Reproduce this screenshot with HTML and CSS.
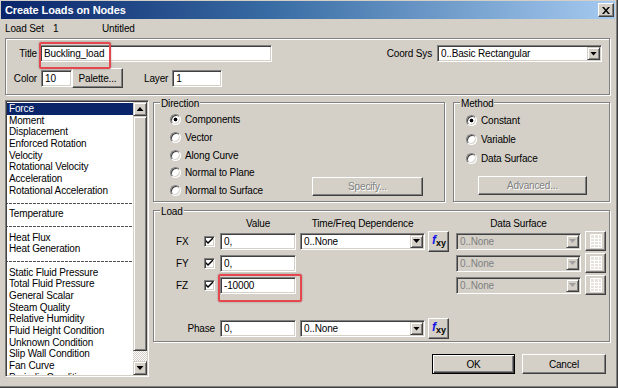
FILE: index.html
```html
<!DOCTYPE html>
<html lang="en">
<head>
<meta charset="UTF-8">
<meta name="viewport" content="width=device-width, initial-scale=1.0">
<title>Create Loads on Nodes</title>
<link rel="stylesheet" href="styles.css">
</head>
<body>

<div class="window">
  <!-- Caption bar -->
  <div class="titlebar">
    <span class="caption">Create Loads on Nodes</span>
    <span class="close-btn">
      <svg width="8" height="7" viewBox="0 0 8 7"><path d="M0 0h2l2 2.4L6 0h2L5 3.5 8 7H6L4 4.6 2 7H0l3-3.5z" fill="#000"/></svg>
    </span>
  </div>

  <div class="dialog">
    <div class="loadset">
      <span class="ls-label">Load Set</span>
      <span class="ls-id">1</span>
      <span class="ls-name">Untitled</span>
    </div>

    <!-- Title / colour / layer -->
    <div class="etched top-group">
      <div class="top-row">
        <span class="lbl-col">Title</span>
        <span class="mark mark-title"><input class="field title-field" value="Buckling_load"></span>
        <span class="coord-lbl">Coord Sys</span>
        <div class="combo coord-combo"><span class="combo-text">0..Basic Rectangular</span><span class="drop"><i class="arrow-down"></i></span></div>
      </div>
      <div class="top-row second">
        <span class="lbl-col">Color</span>
        <input class="field color-field" value="10">
        <button class="btn palette-btn">Palette...</button>
        <span class="layer-lbl">Layer</span>
        <input class="field layer-field" value="1">
      </div>
    </div>

    <div class="main">
      <!-- Load type list -->
      <div class="listbox">
        <ul class="items">
          <li class="sel">Force</li>
          <li>Moment</li>
          <li>Displacement</li>
          <li>Enforced Rotation</li>
          <li>Velocity</li>
          <li>Rotational Velocity</li>
          <li>Acceleration</li>
          <li>Rotational Acceleration</li>
          <li class="sep"></li>
          <li>Temperature</li>
          <li class="sep"></li>
          <li>Heat Flux</li>
          <li>Heat Generation</li>
          <li class="sep"></li>
          <li>Static Fluid Pressure</li>
          <li>Total Fluid Pressure</li>
          <li>General Scalar</li>
          <li>Steam Quality</li>
          <li>Relative Humidity</li>
          <li>Fluid Height Condition</li>
          <li>Unknown Condition</li>
          <li>Slip Wall Condition</li>
          <li>Fan Curve</li>
          <li>Periodic Condition</li>
        </ul>
        <div class="scrollbar">
          <span class="sb-btn"><i class="arrow-up"></i></span>
          <span class="sb-thumb"></span>
          <span class="sb-track"></span>
          <span class="sb-btn"><i class="arrow-down"></i></span>
        </div>
      </div>

      <div class="right">
        <div class="upper">
          <div class="etched group direction">
            <span class="legend">Direction</span>
            <div class="radios">
              <div class="radio-row"><span class="radio on"></span>Components</div>
              <div class="radio-row"><span class="radio"></span>Vector</div>
              <div class="radio-row"><span class="radio"></span>Along Curve</div>
              <div class="radio-row"><span class="radio"></span>Normal to Plane</div>
              <div class="radio-row"><span class="radio"></span>Normal to Surface</div>
            </div>
            <button class="btn specify-btn" disabled>Specify...</button>
          </div>

          <div class="etched group method">
            <span class="legend">Method</span>
            <div class="radios">
              <div class="radio-row"><span class="radio on"></span>Constant</div>
              <div class="radio-row"><span class="radio"></span>Variable</div>
              <div class="radio-row"><span class="radio"></span>Data Surface</div>
            </div>
            <button class="btn advanced-btn" disabled>Advanced...</button>
          </div>
        </div>

        <div class="etched group load">
          <span class="legend">Load</span>
          <div class="load-grid">
            <span class="hd hd-value">Value</span>
            <span class="hd hd-time">Time/Freq Dependence</span>
            <span class="hd hd-ds">Data Surface</span>

            <!-- FX -->
            <span class="comp">FX</span>
            <span class="check"><svg width="7" height="7" viewBox="0 0 7 7"><path d="M0 2l2 2 5-5v2L2 6 0 4z" fill="#000"/></svg></span>
            <input class="field val" value="0,">
            <div class="combo tf"><span class="combo-text">0..None</span><span class="drop"><i class="arrow-down"></i></span></div>
            <button class="btn fxy"><span class="fx-f">f</span><span class="fx-xy">xy</span></button>
            <div class="combo ds disabled"><span class="combo-text">0..None</span><span class="drop"><i class="arrow-down"></i></span></div>
            <button class="btn grid-btn" disabled><svg width="12" height="14" viewBox="0 0 12 14"><path d="M.5.5h11v13H.5zM.5 4.5h11M.5 7.5h11M.5 10.5h11M4.5.5v13M8.5.5v13" fill="#E6E3DC" stroke="#fff"/></svg></button>

            <!-- FY -->
            <span class="comp">FY</span>
            <span class="check"><svg width="7" height="7" viewBox="0 0 7 7"><path d="M0 2l2 2 5-5v2L2 6 0 4z" fill="#000"/></svg></span>
            <input class="field val" value="0,">
            <div class="combo ds disabled"><span class="combo-text">0..None</span><span class="drop"><i class="arrow-down"></i></span></div>
            <button class="btn grid-btn" disabled><svg width="12" height="14" viewBox="0 0 12 14"><path d="M.5.5h11v13H.5zM.5 4.5h11M.5 7.5h11M.5 10.5h11M4.5.5v13M8.5.5v13" fill="#E6E3DC" stroke="#fff"/></svg></button>

            <!-- FZ -->
            <span class="comp">FZ</span>
            <span class="check"><svg width="7" height="7" viewBox="0 0 7 7"><path d="M0 2l2 2 5-5v2L2 6 0 4z" fill="#000"/></svg></span>
            <span class="mark mark-fz val"><input class="field val" value="-10000"></span>
            <div class="combo ds disabled"><span class="combo-text">0..None</span><span class="drop"><i class="arrow-down"></i></span></div>
            <button class="btn grid-btn" disabled><svg width="12" height="14" viewBox="0 0 12 14"><path d="M.5.5h11v13H.5zM.5 4.5h11M.5 7.5h11M.5 10.5h11M4.5.5v13M8.5.5v13" fill="#E6E3DC" stroke="#fff"/></svg></button>

            <!-- Phase -->
            <span class="phase-lbl">Phase</span>
            <input class="field val phase" value="0,">
            <div class="combo tf phase"><span class="combo-text">0..None</span><span class="drop"><i class="arrow-down"></i></span></div>
            <button class="btn fxy phase"><span class="fx-f">f</span><span class="fx-xy">xy</span></button>
          </div>
        </div>

        <div class="actions">
          <button class="btn default ok-btn">OK</button>
          <button class="btn cancel-btn">Cancel</button>
        </div>
      </div>
    </div>
  </div>
</div>

</body>
</html>
```

FILE: styles.css
```css
* {
  box-sizing: border-box;
}

body {
  margin: 0;
  background: #fff;
  font-family: "Liberation Sans", Arial, sans-serif;
  font-size: 10px;
  letter-spacing: -0.15px;
  color: #000;
}

/* Window frame */
.window {
  width: 618px;
  height: 388px;
  display: flex;
  flex-direction: column;
  padding: 1px 2px 2px 1px;
  background: #D4D0C8;
  border-right: 1px solid #404040;
  border-bottom: 1px solid #404040;
  box-shadow: inset -1px -1px #808080;
}

.titlebar {
  height: 18px;
  display: flex;
  align-items: center;
  padding: 0 1px 0 4px;
  background: linear-gradient(90deg, #0A246A 0%, #3A6EA5 45%, #A6CAF0 100%);
  color: #fff;
  font-size: 11px;
  font-weight: bold;
  letter-spacing: -0.1px;
}

.close-btn {
  margin-left: auto;
  width: 16px;
  height: 14px;
  display: flex;
  align-items: center;
  justify-content: center;
  background: #D4D0C8;
  border: 1px solid;
  border-color: #fff #404040 #404040 #fff;
  box-shadow: inset -1px -1px #808080;
}

.dialog {
  flex: 1;
  padding: 0 5px 0 4px;
}

.loadset {
  height: 19px;
  display: flex;
  align-items: center;
}

.ls-label { width: 48px; }
.ls-id { width: 49px; }

/* Etched frames */
.etched {
  border: 1px solid #808080;
  box-shadow: inset 1px 1px #fff, 1px 1px #fff;
}

.group {
  position: relative;
}

.legend {
  position: absolute;
  top: -5px;
  left: 6px;
  padding: 0 1px;
  line-height: 12px;
  background: #D4D0C8;
}

.top-group {
  height: 57px;
  display: flex;
  flex-direction: column;
  gap: 6px;
  padding: 6px 7px 0 0;
}

.top-row {
  height: 17px;
  display: flex;
  align-items: center;
}

.top-row.second {
  height: 20px;
}

.lbl-col {
  width: 31px;
  margin-right: 3px;
  text-align: right;
}

.second .lbl-col { margin-right: 4px; }

.title-field { width: 232px; }

.coord-lbl {
  margin-left: auto;
  margin-right: 5px;
}

.coord-combo { width: 165px; }

.color-field { width: 31px; }

.palette-btn {
  width: 51px;
  height: 20px;
  margin-left: 6px;
}

.layer-lbl {
  margin-left: 21px;
  margin-right: 4px;
}

.layer-field { width: 50px; }

/* Inputs */
.field {
  height: 17px;
  margin: 0;
  padding: 0 3px;
  font: inherit;
  letter-spacing: inherit;
  color: #000;
  background: #fff;
  border: 1px solid;
  border-color: #808080 #fff #fff #808080;
  box-shadow: inset 1px 1px #404040, inset -1px -1px #D4D0C8;
  outline: none;
}

.combo {
  height: 17px;
  display: flex;
  padding: 1px;
  background: #fff;
  border: 1px solid;
  border-color: #808080 #fff #fff #808080;
  box-shadow: inset 1px 1px #404040, inset -1px -1px #D4D0C8;
}

.combo-text {
  flex: 1;
  padding-left: 2px;
  line-height: 13px;
  white-space: nowrap;
  overflow: hidden;
}

.drop {
  width: 13px;
  height: 13px;
  display: flex;
  align-items: center;
  justify-content: center;
  background: #D4D0C8;
  border: 1px solid;
  border-color: #D4D0C8 #404040 #404040 #D4D0C8;
  box-shadow: inset 1px 1px #fff, inset -1px -1px #808080;
}

.arrow-down,
.arrow-up {
  display: block;
  width: 7px;
  height: 4px;
  background: #000;
  clip-path: polygon(0 0, 100% 0, 50% 100%);
}

.arrow-up {
  clip-path: polygon(50% 0, 100% 100%, 0 100%);
}

.combo.disabled {
  background: #D4D0C8;
  color: #808080;
}

.combo.disabled .arrow-down {
  background: #A0A0A0;
}

/* Buttons */
.btn {
  margin: 0;
  padding: 0;
  font: inherit;
  letter-spacing: inherit;
  color: #000;
  background: #D4D0C8;
  border: 1px solid;
  border-color: #fff #404040 #404040 #fff;
  box-shadow: inset -1px -1px #808080;
}

.btn:disabled {
  color: #808080;
  text-shadow: 1px 1px #fff;
}

.btn.default {
  border-color: #000;
  box-shadow: inset 1px 1px #fff, inset -1px -1px #404040, inset -2px -2px #808080;
}

/* Main area */
.main {
  display: flex;
  gap: 4px;
  margin-top: 5px;
}

.listbox {
  width: 144px;
  height: 277px;
  display: flex;
  padding: 1px;
  background: #fff;
  border: 1px solid;
  border-color: #808080 #fff #fff #808080;
  box-shadow: inset 1px 1px #404040, inset -1px -1px #D4D0C8;
}

.items {
  flex: 1;
  margin: 0;
  padding: 1px 0 0;
  list-style: none;
  overflow: hidden;
}

.items li {
  height: 11.7px;
  line-height: 11.7px;
  padding-left: 2px;
  white-space: nowrap;
}

.items li.sel {
  background: #0A246A;
  color: #fff;
}

.items li.sep {
  background-image: linear-gradient(90deg, #505050 3px, transparent 3px);
  background-size: 4px 1px;
  background-repeat: repeat-x;
  background-position: 2px 6px;
}

.scrollbar {
  width: 14px;
  display: flex;
  flex-direction: column;
}

.sb-btn,
.sb-thumb {
  background: #D4D0C8;
  border: 1px solid;
  border-color: #D4D0C8 #404040 #404040 #D4D0C8;
  box-shadow: inset 1px 1px #fff, inset -1px -1px #808080;
}

.sb-btn {
  height: 14px;
  display: flex;
  align-items: center;
  justify-content: center;
}

.sb-thumb {
  height: 235px;
}

.sb-track {
  flex: 1;
  background: repeating-conic-gradient(#fff 0 25%, #D4D0C8 0 50%) 0 0 / 2px 2px;
}

.right {
  flex: 1;
  display: flex;
  flex-direction: column;
}

.upper {
  height: 100px;
  display: flex;
  gap: 8px;
  margin-top: 2px;
}

/* Radio groups */
.radios {
  display: flex;
  flex-direction: column;
}

.radio-row {
  height: 17.7px;
  display: flex;
  align-items: center;
  gap: 4px;
}

.radio {
  flex: none;
  width: 11px;
  height: 11px;
  border-radius: 50%;
  background: #fff;
  border: 1px solid;
  border-color: #808080 #fff #fff #808080;
  box-shadow: inset 1px 1px #404040, inset -1px -1px #D4D0C8;
}

.radio.on {
  background: radial-gradient(circle, #000 0 1.6px, #fff 2.2px);
}

.direction {
  width: 292px;
  display: flex;
  padding: 8px 0 0 16px;
}

.specify-btn {
  align-self: flex-end;
  margin: 0 21px 5px auto;
  width: 111px;
  height: 19px;
}

.method {
  flex: 1;
  display: flex;
  flex-direction: column;
  align-items: flex-start;
  padding: 8px 0 0 12px;
}

.method .radio-row {
  height: 19px;
}

.advanced-btn {
  margin: 8px 0 0 12px;
  width: 109px;
  height: 19px;
}

/* Load grid */
.load {
  height: 132px;
  margin-top: 8px;
}

.load-grid {
  display: grid;
  grid-template-columns: 50px 16px 80px 128px 28px 129px 21px;
  grid-template-rows: 19px 22px 22px 22px 22px 21px;
  align-items: center;
}

.hd {
  align-self: end;
  line-height: 13px;
  text-align: center;
}

.hd-value { grid-column: 3; width: 76px; }
.hd-time { grid-column: 4; width: 125px; }
.hd-ds { grid-column: 6; width: 125px; }

.comp {
  grid-column: 1;
  padding-left: 22px;
}

.check {
  grid-column: 2;
  width: 11px;
  height: 11px;
  display: flex;
  align-items: center;
  justify-content: center;
  background: #fff;
  border: 1px solid;
  border-color: #808080 #fff #fff #808080;
  box-shadow: inset 1px 1px #404040, inset -1px -1px #D4D0C8;
}

.val {
  grid-column: 3;
  width: 76px;
}

.tf {
  grid-column: 4;
  width: 125px;
}

.fxy {
  grid-column: 5;
  width: 21px;
  height: 21px;
  display: flex;
  align-items: flex-start;
  padding: 2px 0 0 3px;
  font-weight: bold;
  letter-spacing: 0;
}

.fx-f {
  color: #1414E6;
  font-style: italic;
  font-size: 12px;
  line-height: 12px;
}

.fx-xy {
  margin-top: 5px;
  font-size: 9px;
  line-height: 9px;
}

.ds {
  grid-column: 6;
  width: 125px;
}

.grid-btn {
  grid-column: 7;
  width: 21px;
  height: 20px;
  display: flex;
  align-items: center;
  justify-content: center;
}

.phase-lbl {
  grid-row: 6;
  grid-column: 1 / 3;
  padding-right: 5px;
  text-align: right;
}

.phase { grid-row: 6; }

/* Red annotation frames */
.mark {
  position: relative;
  display: flex;
}

.mark::after {
  content: "";
  position: absolute;
  border: 2px solid #E5474F;
  border-radius: 2px;
  box-shadow: 0 0 2px rgba(0, 0, 0, 0.35);
}

.mark-title::after {
  left: -1px;
  top: -3px;
  width: 68px;
  height: 23px;
}

.mark-fz::after {
  left: -2px;
  top: -3px;
  width: 80px;
  height: 24px;
}

.actions {
  display: flex;
  justify-content: flex-end;
  gap: 7px;
  margin-top: 12px;
  padding-right: 4px;
}

.ok-btn { width: 83px; height: 20px; }
.cancel-btn { width: 84px; height: 20px; }
```
